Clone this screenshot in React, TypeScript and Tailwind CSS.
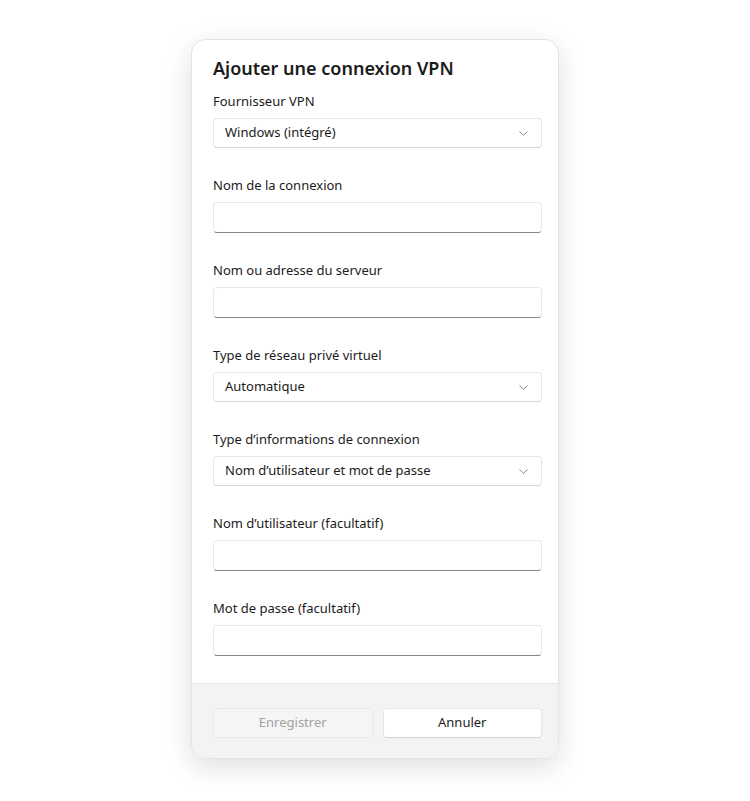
import React from "react";

const font = { fontFamily: '"Noto Sans", "Open Sans", sans-serif' };

function Chevron() {
  return (
    <svg width="9" height="5" viewBox="0 0 9 5" className="text-[#8a8a8a]">
      <path d="M0.75 0.75 L4.5 4.25 L8.25 0.75" fill="none" stroke="currentColor" strokeWidth="1" strokeLinecap="round" strokeLinejoin="round" />
    </svg>
  );
}

function Select({ value }: { value: string }) {
  return (
    <div className="h-[30px] flex items-center justify-between pl-[11px] pr-[13px] bg-white border border-[#e6e6e6] border-b-[#d6d6d6] rounded-[4px] text-[13px] text-[#1b1b1b]">
      <span>{value}</span>
      <Chevron />
    </div>
  );
}

function Input() {
  return (
    <div className="h-[31px] bg-white border border-[#e8e8e8] border-b-[#868686] rounded-[4px]" />
  );
}

function Field({ label, children }: { label: string; children: React.ReactNode }) {
  return (
    <div className="flex flex-col gap-[7px]">
      <div className="text-[13px] leading-[20px] text-[#1b1b1b]">{label}</div>
      {children}
    </div>
  );
}

export default function App() {
  return (
    <div className="min-h-screen bg-white flex justify-center pt-[39px]" style={font}>
      <div className="w-[368px] h-[720px] bg-white rounded-[14px] border border-[#e4e4e4] shadow-[0_8px_28px_rgba(0,0,0,0.13)] overflow-hidden flex flex-col">
        <div className="flex-1 pl-[21px] pr-[16px] pt-[14px] flex flex-col">
          <h1 className="text-[18px] leading-[28px] font-semibold text-[#1b1b1b] mb-[9px]">
            Ajouter une connexion VPN
          </h1>
          <div className="flex flex-col gap-[27px]">
            <Field label="Fournisseur VPN">
              <Select value="Windows (intégré)" />
            </Field>
            <Field label="Nom de la connexion">
              <Input />
            </Field>
            <Field label="Nom ou adresse du serveur">
              <Input />
            </Field>
            <Field label="Type de réseau privé virtuel">
              <Select value="Automatique" />
            </Field>
            <Field label="Type d’informations de connexion">
              <Select value="Nom d’utilisateur et mot de passe" />
            </Field>
            <Field label="Nom d’utilisateur (facultatif)">
              <Input />
            </Field>
            <Field label="Mot de passe (facultatif)">
              <Input />
            </Field>
          </div>
        </div>
        <div className="h-[75px] bg-[#f3f3f3] border-t border-[#e5e5e5] pl-[21px] pr-[16px] pt-[24px] flex gap-[10px]">
          <button className="flex-1 h-[30px] rounded-[4px] bg-[#f5f5f5] border border-[#e9e9e9] text-[13px] text-[#a2a2a2]">
            Enregistrer
          </button>
          <button className="flex-1 h-[30px] rounded-[4px] bg-white border border-[#e6e6e6] border-b-[#d3d3d3] text-[13px] text-[#1b1b1b]">
            Annuler
          </button>
        </div>
      </div>
    </div>
  );
}
